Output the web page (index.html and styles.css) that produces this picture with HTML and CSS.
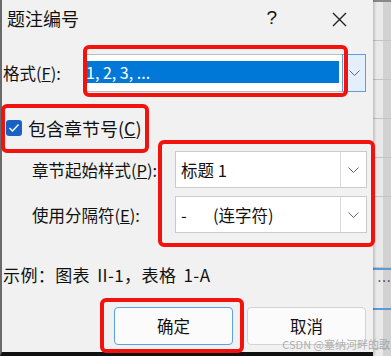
FILE: index.html
```html
<!DOCTYPE html>
<html>
<head>
    <title>题注编号</title>
    <link rel="stylesheet" href="styles.css">
</head>
<body>
    <div class="screen">
        <div class="dialog">
            <div class="titlebar">
                <span class="title">题注编号</span>
                <span class="help">?</span>
                <svg class="close" width="15" height="15" viewBox="0 0 15 15">
                    <path d="M1 1 L14 14 M14 1 L1 14" stroke="#222" stroke-width="1.4" fill="none"/>
                </svg>
            </div>

            <div class="row format-row">
                <label class="label">格式(<u>F</u>):</label>
                <div class="format-field">
                    <div class="selected">1, 2, 3, ...</div>
                </div>
                <div class="format-btn">
                    <svg width="11" height="6" viewBox="0 0 11 6"><path d="M0.5 0.5 L5.5 5.5 L10.5 0.5" stroke="#666" fill="none"/></svg>
                </div>
            </div>

            <div class="row check-row">
                <span class="checkbox">
                    <svg width="12" height="10" viewBox="0 0 12 10"><path d="M1.5 5 L4.5 8 L10.5 1.5" stroke="#fff" stroke-width="1.4" fill="none"/></svg>
                </span>
                <span class="check-label">包含章节号(<u>C</u>)</span>
            </div>

            <div class="row sub-row first">
                <label class="sub-label">章节起始样式(<u>P</u>):</label>
                <div class="combo">
                    <span class="combo-text">标题 1</span>
                    <span class="combo-btn">
                        <svg width="11" height="6" viewBox="0 0 11 6"><path d="M0.5 0.5 L5.5 5.5 L10.5 0.5" stroke="#666" fill="none"/></svg>
                    </span>
                </div>
            </div>

            <div class="row sub-row">
                <label class="sub-label">使用分隔符(<u>E</u>):</label>
                <div class="combo">
                    <span class="combo-text"><span class="dash">-</span>(连字符)</span>
                    <span class="combo-btn">
                        <svg width="11" height="6" viewBox="0 0 11 6"><path d="M0.5 0.5 L5.5 5.5 L10.5 0.5" stroke="#666" fill="none"/></svg>
                    </span>
                </div>
            </div>

            <div class="example">示例：图表 II-1，表格 1-A</div>

            <div class="buttons">
                <button class="btn btn-ok">确定</button>
                <button class="btn">取消</button>
            </div>

            <!-- red annotation frames drawn over the dialog -->
            <div class="mark mark-format"></div>
            <div class="mark mark-check"></div>
            <div class="mark mark-chapter"></div>
            <div class="mark mark-ok"></div>
        </div>

        <div class="backdrop">
            <div class="band"></div>
            <div class="band"></div>
            <div class="band"></div>
            <div class="band"></div>
            <div class="band"></div>
            <div class="band tall"></div>
            <div class="band blue">…</div>
            <div class="band"></div>
        </div>

        <div class="watermark">CSDN @塞纳河畔的歌</div>
    </div>
</body>
</html>
```

FILE: styles.css
```css
body {
    margin: 0;
    font-family: "Noto Sans CJK SC", "Noto Sans", sans-serif;
    color: #111;
    background: #f0f0f0;
}

.screen {
    display: flex;
    width: 391px;
    height: 356px;
    position: relative;
    overflow: hidden;
}

.dialog {
    position: relative;
    width: 373px;
    height: 356px;
    box-sizing: border-box;
    flex-shrink: 0;
    background-color: #f1f1f1;
    border-left: 2px solid #6a6a6a;
    border-bottom: 4px solid #111;
    display: flex;
    flex-direction: column;
    box-shadow: 1px 0 3px rgba(0, 0, 0, 0.25);
    z-index: 1;
}

.titlebar {
    display: flex;
    align-items: center;
    height: 36px;
    padding-left: 5px;
}

.title {
    font-size: 18px;
    line-height: 36px;
}

.help {
    margin-left: auto;
    font-family: "Liberation Sans", sans-serif;
    font-size: 19px;
}

.close {
    margin-left: 55px;
    margin-right: 26px;
    margin-top: 3px;
}

.row {
    display: flex;
    align-items: center;
}

.label {
    font-size: 16.5px;
    width: 81px;
    padding-left: 1px;
}

.format-row {
    margin-top: 18px;
    height: 38px;
}

.format-field {
    width: 258px;
    height: 38px;
    box-sizing: border-box;
    background: #fff;
    border-top: 1px solid #bdbdbd;
    border-bottom: 1px solid #bdbdbd;
    padding: 6px 3px 0 0;
}

.selected {
    height: 22px;
    background-color: #0078d7;
    color: #fff;
    font-size: 16px;
    line-height: 22px;
    padding-left: 2px;
}

.format-btn {
    width: 24px;
    height: 38px;
    box-sizing: border-box;
    background: #e3f0fb;
    border: 1px solid #5d9fdc;
    display: flex;
    align-items: center;
    justify-content: center;
}

.check-row {
    margin-top: 26px;
    height: 20px;
    padding-left: 4px;
}

.checkbox {
    width: 16px;
    height: 16px;
    border-radius: 3px;
    background-color: #1862c6;
    display: flex;
    align-items: center;
    justify-content: center;
}

.check-label {
    font-size: 18px;
    margin-left: 6px;
}

.sub-row {
    height: 37px;
    margin-top: 8px;
}

.sub-row.first {
    margin-top: 13px;
}

.sub-label {
    font-size: 16.5px;
    width: 143px;
    padding-left: 30px;
}

.combo {
    width: 192px;
    height: 37px;
    box-sizing: border-box;
    background: #fff;
    border: 1px solid #cbcbcb;
    display: flex;
    align-items: center;
}

.combo-text {
    flex: 1;
    font-size: 16.5px;
    padding-left: 5px;
}

.dash {
    display: inline-block;
    width: 32px;
}

.combo-btn {
    width: 25px;
    height: 100%;
    border-left: 1px solid #d8d8d8;
    display: flex;
    align-items: center;
    justify-content: center;
}

.example {
    margin-top: 32px;
    padding-left: 1px;
    font-size: 17px;
    line-height: 20px;
    word-spacing: 3px;
    letter-spacing: 0.4px;
}

.buttons {
    display: flex;
    gap: 14px;
    margin-top: 22px;
    padding-left: 112px;
}

.btn {
    width: 119px;
    height: 38px;
    box-sizing: border-box;
    background-color: #fbfbfb;
    border: 1px solid #d3d3d3;
    border-radius: 4px;
    font-family: "Noto Sans CJK SC", sans-serif;
    font-size: 16.5px;
    color: #111;
    padding: 0;
}

.btn-ok {
    border: 1.5px solid #5aa2e6;
}

.mark {
    position: absolute;
    border: 4px solid #f2120e;
    border-radius: 6px;
    box-sizing: border-box;
}

.mark-format {
    left: 81px;
    top: 45px;
    width: 265px;
    height: 52px;
}

.mark-check {
    left: -1px;
    top: 104px;
    width: 148px;
    height: 49px;
}

.mark-chapter {
    left: 156px;
    top: 140px;
    width: 217px;
    height: 107px;
}

.mark-ok {
    left: 98px;
    top: 298px;
    width: 144px;
    height: 55px;
}

.backdrop {
    flex: 1;
    display: flex;
    flex-direction: column;
    background: linear-gradient(to right, #e9e9e9 0, #e9e9e9 10px, #d2d2d2 10px);
    border-top: 2px solid #888;
}

.band {
    height: 38px;
    border-bottom: 1px solid #c4c4c4;
}

.band.tall {
    height: 70px;
}

.band.blue {
    height: 38px;
    border-top: 2px solid #5b9bd5;
    border-bottom: 2px solid #5b9bd5;
    font-size: 14px;
    line-height: 20px;
    color: #333;
    text-align: right;
}

.watermark {
    position: absolute;
    right: 1px;
    bottom: 4px;
    z-index: 2;
    font-size: 11px;
    color: rgba(150, 150, 150, 0.75);
    white-space: nowrap;
}
```
